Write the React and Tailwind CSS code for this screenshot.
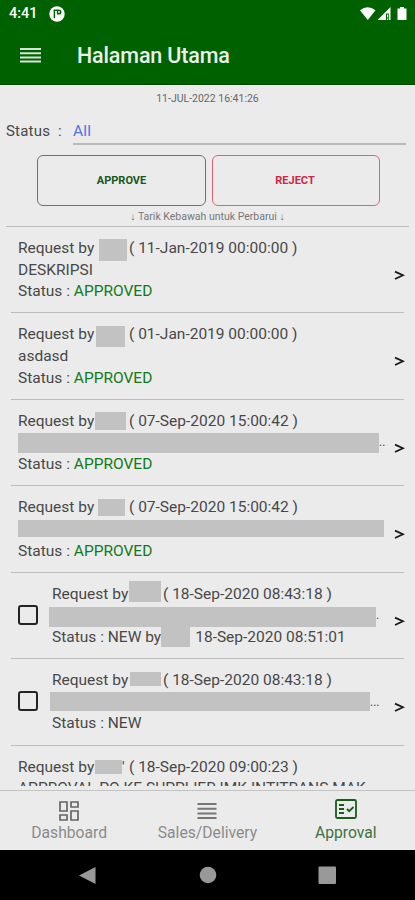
const requests = [
  {
    date: '( 11-Jan-2019 00:00:00 )',
    name: 'left-[81px] top-[1px] h-[22px] w-[28px]',
    text: 'DESKRIPSI',
    status: 'APPROVED',
  },
  {
    date: '( 01-Jan-2019 00:00:00 )',
    name: 'left-[78px] top-[2px] h-[21px] w-[29px]',
    text: 'asdasd',
    status: 'APPROVED',
  },
  {
    date: '( 07-Sep-2020 15:00:42 )',
    name: 'left-[77px] top-[1px] h-[18px] w-[31px]',
    bar: 'mt-[1px] h-[20px] w-[361px]',
    tail: '..',
    status: 'APPROVED',
  },
  {
    date: '( 07-Sep-2020 15:00:42 )',
    name: 'left-[80px] top-[2px] h-[17px] w-[27px]',
    bar: 'mt-[1px] h-[17px] w-[366px]',
    status: 'APPROVED',
  },
  {
    date: '( 18-Sep-2020 08:43:18 )',
    name: 'left-[77px] top-[-3px] h-[21px] w-[32px]',
    bar: '-ml-[3px] mt-[2px] h-[20px] w-[327px]',
    tail: '.',
    status: 'NEW',
    by: '18-Sep-2020 08:51:01',
    selectable: true,
  },
  {
    date: '( 18-Sep-2020 08:43:18 )',
    name: 'left-[78px] top-[2px] h-[14px] w-[31px]',
    bar: '-ml-[2px] h-[19px] w-[320px]',
    tail: '...',
    status: 'NEW',
    selectable: true,
  },
  {
    date: '( 18-Sep-2020 09:00:23 )',
    name: 'left-[77px] top-[3px] h-[14px] w-[27px]',
    mark: true,
    text: 'APPROVAL PO KE SUPPLIER IMK INTITRANS MAK',
    status: 'NEW',
  },
];

function Request({ item }) {
  return (
    <div className="mx-[11px] flex h-[86.45px] shrink-0 border-b-[1.5px] border-[#bdbdbd] pl-[7px] pt-[11px]">
      {item.selectable && (
        <div className="mr-[14px] mt-[21px] h-5 w-5 shrink-0 rounded-[3px] border-2 border-[#242424]" />
      )}
      <div className="min-w-0 flex-1 text-[15.5px] leading-[21.6px] whitespace-nowrap">
        <div className="relative flex h-[21.6px]">
          <span className="w-[111px] shrink-0">Request by</span>
          <span className={`absolute bg-[#c2c2c2] ${item.name}`} />
          {item.mark && <span className="absolute left-[104px]">'</span>}
          <span>{item.date}</span>
        </div>
        <div className="flex h-[21.6px]">
          {item.bar && <span className={`block shrink-0 bg-[#c2c2c2] ${item.bar}`} />}
          {item.tail && <span className="text-[12px]">{item.tail}</span>}
          {item.text}
        </div>
        <div className="flex h-[21.6px]">
          <span className="whitespace-pre">Status : </span>
          <span className={item.status === 'APPROVED' ? 'text-[#127a18]' : ''}>{item.status}</span>
          {item.by && (
            <>
              <span className="whitespace-pre"> by</span>
              <span className="mr-[5px] h-[20px] w-[29px] bg-[#c2c2c2]" />
              <span>{item.by}</span>
            </>
          )}
        </div>
      </div>
      <div className="-mr-[1px] mt-[27px] w-[11px] shrink-0">
        <svg width="11" height="22" viewBox="0 0 11 22" fill="none" stroke="#181818" strokeWidth="1.8">
          <path d="M1 6.6 9 10.3 1 14" />
        </svg>
      </div>
    </div>
  );
}

function StatusBar() {
  return (
    <div className="flex h-[27px] items-center pl-[9px] pr-[7px] text-white">
      <span className="w-[40px] text-[14.5px] font-medium">4:41</span>
      <svg width="16" height="16" viewBox="0 0 16 16">
        <circle cx="8" cy="8" r="7.7" fill="#fff" />
        <path d="M5.4 3.5v8.8M5.8 4.2h4q2 0 2 1.8t-2 1.8H8.6V4.5" fill="none" stroke="#075f09" strokeWidth="1.5" />
      </svg>
      <svg className="ml-auto" width="48" height="16" viewBox="0 0 48 16" fill="#fff">
        <path d="M0 4.3Q7.5-1.7 15.5 4.3L7.8 14Z" />
        <path d="M17.5 14 30.5 1v13h-1.6V7.5h-3V14Z" />
        <path d="M27 8.5h1.2v3H27zM27 12.5h1.2V14H27z" />
        <path d="M40 1h4v1.5h2.5V14h-9V2.5H40Z" />
      </svg>
    </div>
  );
}

function GridIcon() {
  return (
    <svg width="20" height="20" viewBox="0 0 20 20" fill="none" stroke="#666" strokeWidth="1.7">
      <path d="M1 1h7v9H1zM12 1h7v5h-7zM1 14h7v5H1zM12 10h7v9h-7z" />
    </svg>
  );
}

function LinesIcon() {
  return (
    <svg width="20" height="20" viewBox="0 0 20 20" stroke="#777" strokeWidth="2">
      <path d="M.5 3h19M.5 7.7h19M.5 12.4h19M.5 17.1h19" />
    </svg>
  );
}

function ApprovalIcon() {
  return (
    <svg width="22" height="20" viewBox="0 0 22 20" fill="none" stroke="#175d1b" strokeWidth="1.8">
      <rect x="1" y="1" width="20" height="18" rx="1.5" />
      <path d="M4 6h5M4 10h5M4 14h5M12 10l2.2 2.2L18.5 8" />
    </svg>
  );
}

export default function App() {
  return (
    <div className="flex h-[900px] w-[415px] flex-col overflow-hidden bg-[#ebebeb] font-[Roboto,sans-serif] text-[#484848]">
      <header className="h-[85px] shrink-0 border-b border-[#064806] bg-[#006100]">
        <StatusBar />
        <div className="flex h-[58px] items-center pl-[20px] text-[#e9f2e9]">
          <svg className="-mt-[3px]" width="21" height="16" viewBox="0 0 21 16" stroke="#d5e4d5" strokeWidth="2">
            <path d="M0 2h21M0 6.2h21M0 10.4h21M0 14.6h21" />
          </svg>
          <h1 className="ml-[36px] text-[21.5px] font-medium tracking-[-0.15px]">Halaman Utama</h1>
        </div>
      </header>

      <section className="mx-[6px] flex h-[142px] shrink-0 flex-col border-b-[1.5px] border-[#bdbdbd]">
        <div className="mt-[6px] h-[15px] text-center text-[10.5px] leading-[15px] text-[#666]">11-JUL-2022 16:41:26</div>
        <div className="mt-[13px] flex h-[26px] text-[15px] leading-[24px] tracking-[0.2px]">
          <span className="w-[67px] whitespace-pre">Status  :</span>
          <span className="w-[333px] border-b-2 border-[#b9b9b9] text-[15.5px] text-[#5274e4]">All</span>
        </div>
        <div className="ml-[31px] mt-[10px] flex h-[51px] gap-[6px] text-[11px] font-bold">
          <div className="flex w-[169px] items-center justify-center rounded-[6px] border border-[#5e7d66] pt-[2px] text-[#17581b]">APPROVE</div>
          <div className="flex w-[168px] items-center justify-center rounded-[6px] border border-[#dd6471] pr-[2px] pt-[2px] text-[#cb2745]">REJECT</div>
        </div>
        <div className="mt-[4px] text-center text-[10.5px] leading-[14px] text-[#777]">↓ Tarik Kebawah untuk Perbarui ↓</div>
      </section>

      <main className="flex h-[559px] shrink-0 flex-col overflow-hidden">
        {requests.map((item, i) => (
          <Request key={i} item={item} />
        ))}
      </main>
      <div className="h-[4px] shrink-0" />

      <nav className="flex h-[60px] shrink-0 border-t-[1.5px] border-[#c3c3c3] text-[15.7px] leading-[20px] text-[#8b8b8b]">
        <div className="flex flex-1 flex-col items-center pt-[10px]">
          <GridIcon />
          <span className="mt-[2px]">Dashboard</span>
        </div>
        <div className="flex flex-1 flex-col items-center pt-[10px]">
          <LinesIcon />
          <span className="mt-[2px]">Sales/Delivery</span>
        </div>
        <div className="flex flex-1 flex-col items-center pt-[8px] text-[#3d7340]">
          <ApprovalIcon />
          <span className="mt-[4px]">Approval</span>
        </div>
      </nav>

      <footer className="flex flex-1 bg-black">
        <svg width="415" height="50" viewBox="0 0 415 50" fill="#999">
          <path d="M79 25.5 95.5 17v17Z" />
          <circle cx="208" cy="25" r="8.3" />
          <rect x="318.5" y="16.5" width="17.5" height="17.5" rx="1" />
        </svg>
      </footer>
    </div>
  );
}
